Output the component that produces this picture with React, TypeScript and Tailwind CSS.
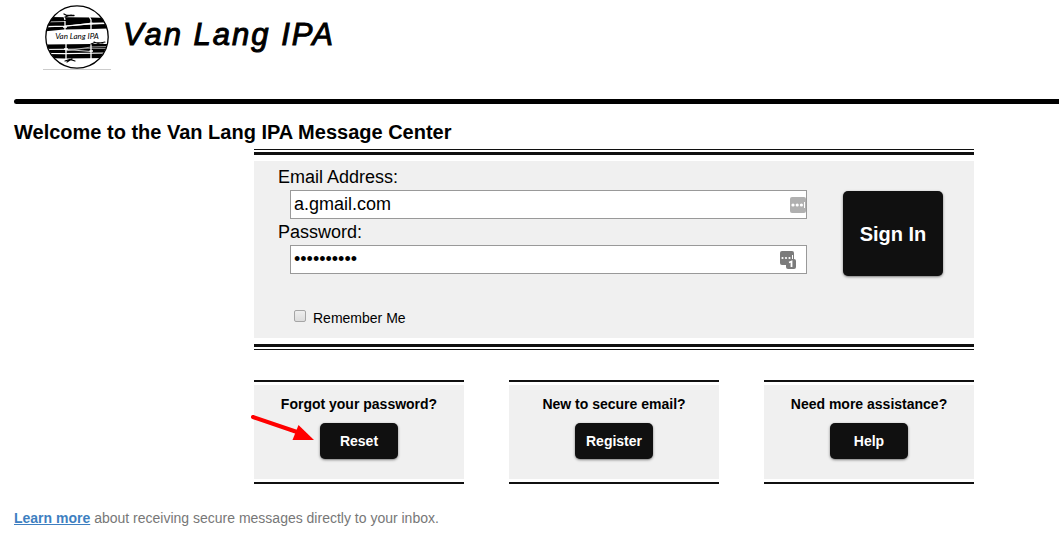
import type { ReactNode } from 'react';

function LogoMark() {
  return (
    <svg width="68" height="66" viewBox="0 0 68 66" aria-hidden="true" className="shrink-0">
      <defs>
        <clipPath id="disc">
          <circle cx="34" cy="32" r="31" />
        </clipPath>
      </defs>
      <g clipPath="url(#disc)">
        <path d="M0 12 L48 12.500 L68 13 V17.500 L48 17.800 L21 21 L0 21 Z" fill="#000" />
        <path d="M0 22.500 L21 21.500 L48 19.500 L68 19 V23.500 L48 24 L21 24.500 L0 26.500 Z" fill="#000" />
        <path d="M0 39.500 L48 39 L68 39 V43 L48 43.500 L0 44 Z" fill="#000" />
        <path d="M0 44.800 L21 44.500 L68 43.500 V47.500 L21 48 L0 48 Z" fill="#000" />
        <path d="M0 49 L21 49.300 L68 48.500 V53 L21 53.500 L0 53 Z" fill="#000" />
        <g stroke="#fff" fill="none">
          <path d="M0 17 L22 16.500" strokeWidth="1" stroke="#aaa" />
          <path d="M0 21.800 L22 21.200 L48 18.600 L68 18.200" strokeWidth="1.200" />
          <path d="M22 46 L48 42 L68 41.500" strokeWidth="0.800" stroke="#ccc" />
          <path d="M0 44.400 L22 44.400 L48 46.500" strokeWidth="0.800" />
          <path d="M21 11 L22 15 M22 16 V27 M20 22 H24" strokeWidth="1.300" />
          <path d="M46.500 12 L48 15 V25 M46.500 18.500 H50" strokeWidth="1.300" />
          <path d="M23 38 V55 M21 44 H25" strokeWidth="1.300" />
          <path d="M48 38 V54 M46.500 46 H50" strokeWidth="1.300" />
        </g>
      </g>
      <g stroke="#000" fill="none" strokeLinecap="round">
        <path d="M21 9 L24 10.500 L31 10.500 M22 12 L28 10" strokeWidth="1.300" />
        <path d="M48 39 L52 37.500 L60 38 M51 37 L55 38.500 L62 37" strokeWidth="1.100" />
        <path d="M22 56 L27 54.500 L32 56 M24 57 L29 53.800" strokeWidth="1.200" />
      </g>
      <circle cx="34" cy="32" r="31.200" fill="none" stroke="#000" strokeWidth="1.300" />
      <text x="34" y="34" textAnchor="middle" fontFamily="Lato, sans-serif" fontSize="8" fontStyle="italic">
        Van Lang IPA
      </text>
      <path d="M0 64.500 H68" stroke="#ccc" />
    </svg>
  );
}

function EmailFieldIcon() {
  return (
    <svg width="16" height="16" viewBox="0 0 16 16" aria-hidden="true" className="absolute right-px top-[7px]">
      <rect width="16" height="16" rx="2" fill="#b0b0b0" />
      <circle cx="3" cy="8" r="1.600" fill="#fff" />
      <circle cx="7.200" cy="8" r="1.600" fill="#fff" />
      <circle cx="11.400" cy="8" r="1.600" fill="#fff" />
      <path d="M14.500 5 V11" stroke="#fff" />
    </svg>
  );
}

function PasswordFieldIcon() {
  return (
    <svg width="16" height="18" viewBox="0 0 16 18" aria-hidden="true" className="absolute right-[11px] top-[6px]">
      <rect width="14" height="14" rx="2" fill="#7b7b7b" />
      <circle cx="2.500" cy="7" r="1.100" fill="#fff" />
      <circle cx="6" cy="7" r="1.100" fill="#fff" />
      <circle cx="9.500" cy="7" r="1.100" fill="#fff" />
      <path d="M12.500 4 V8" stroke="#fff" />
      <rect x="6" y="8" width="10" height="10" rx="2" fill="#7b7b7b" />
      <path d="M9 11.500 L11.500 10.500 V16" stroke="#fff" strokeWidth="1.800" fill="none" />
    </svg>
  );
}

function Arrow() {
  return (
    <svg width="64" height="30" viewBox="0 0 64 30" aria-hidden="true" className="absolute -left-1 top-[30px]">
      <path d="M3 5 L47 20" stroke="#f00" strokeWidth="4" strokeLinecap="round" />
      <path d="M64 28 L42.500 28 L48.500 13 Z" fill="#f00" />
    </svg>
  );
}

type HelpCardProps = {
  title: string;
  action: string;
  children?: ReactNode;
};

function HelpCard({ title, action, children }: HelpCardProps) {
  return (
    <section className="relative w-[210px] border-y-2 border-[#101010] py-[3px]">
      <div className="flex flex-col items-center gap-[9px] bg-[#f0f0f0] pt-[9px] pb-5 text-sm font-bold">
        <h2 className="leading-5">{title}</h2>
        <button type="button" className="h-9 w-[78px] rounded-[5px] bg-[#101010] text-white shadow-sm shadow-black/40">
          {action}
        </button>
      </div>
      {children}
    </section>
  );
}

const inputClass =
  'block h-[29px] w-full border border-[#999] bg-white pl-[3px] pr-8 text-lg text-black outline-none';

export default function App() {
  return (
    <div className="min-h-screen overflow-hidden bg-white pl-[14px] pt-[5px] pb-5 font-['Liberation_Sans',Arial,sans-serif] text-black">
      <header>
        <div className="flex items-start gap-3 pl-[29px]">
          <LogoMark />
          <p className="pt-2 text-[31px] leading-[44px] italic tracking-[2px] [-webkit-text-stroke:1px_black]">
            Van Lang IPA
          </p>
        </div>
        <div className="mt-7 h-[5px] rounded-l-full bg-black" />
      </header>

      <h1 className="mt-4 text-xl leading-6 font-bold">Welcome to the Van Lang IPA Message Center</h1>

      <main className="mt-[5px] ml-60 max-w-[720px]">
        <div className="border-y border-[#101010] py-[2px]">
          <div className="border-y-3 border-[#101010] py-[6px]">
            <form
              className="flex items-start gap-9 bg-[#f0f0f0] pt-[3px] pr-[31px] pb-[10px] pl-6"
              onSubmit={(e) => e.preventDefault()}
            >
              <div className="flex-1">
                <label htmlFor="email" className="block text-lg leading-[26px]">
                  Email Address:
                </label>
                <div className="relative ml-3">
                  <input id="email" type="text" defaultValue="a.gmail.com" className={inputClass} />
                  <EmailFieldIcon />
                </div>
                <label htmlFor="password" className="block text-lg leading-[26px]">
                  Password:
                </label>
                <div className="relative ml-3">
                  <input id="password" type="password" defaultValue="secret1234" className={inputClass} />
                  <PasswordFieldIcon />
                </div>
                <div className="mt-[34px] ml-4 flex items-center gap-[7px]">
                  <input
                    id="remember"
                    type="checkbox"
                    className="mb-1 size-3 appearance-none rounded-[2px] border border-[#a5a5a5] bg-linear-to-b from-[#eee] to-[#dcdcdc] checked:bg-[#555]"
                  />
                  <label htmlFor="remember" className="text-sm leading-5">
                    Remember Me
                  </label>
                </div>
              </div>
              <button
                type="submit"
                className="mt-[27px] h-[85px] w-[100px] rounded-[5px] bg-[#101010] text-xl font-bold text-white shadow-sm shadow-black/40"
              >
                Sign In
              </button>
            </form>
          </div>
        </div>

        <div className="mt-[30px] flex flex-wrap justify-between gap-y-6">
          <HelpCard title="Forgot your password?" action="Reset">
            <Arrow />
          </HelpCard>
          <HelpCard title="New to secure email?" action="Register" />
          <HelpCard title="Need more assistance?" action="Help" />
        </div>
      </main>

      <footer className="mt-6 text-sm leading-5 text-[#777]">
        <a href="#learn-more" className="font-bold text-[#3e7fc1] underline">
          Learn more
        </a>{' '}
        about receiving secure messages directly to your inbox.
      </footer>
    </div>
  );
}
